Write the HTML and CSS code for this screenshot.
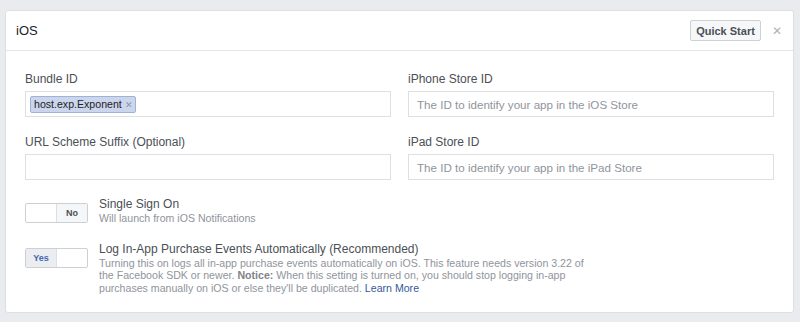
FILE: index.html
```html
<!DOCTYPE html>
<html lang="en">
<head>
    <meta http-equiv="Content-Type" content="text/html; charset=utf-8"/>
    <link rel="stylesheet" href="styles.css">
</head>
<body>
<div class="card">
    <div class="card_header">
        <div class="card_title">iOS</div>
        <div class="header_actions">
            <button class="btn">Quick Start</button>
            <span class="close">&#x2715;</span>
        </div>
    </div>
    <div class="card_body">
        <div class="fields">
            <div class="field">
                <div class="label">Bundle ID</div>
                <div class="input">
                    <span class="token">host.exp.Exponent <span class="token_x">&#x2715;</span></span>
                </div>
            </div>
            <div class="field">
                <div class="label">iPhone Store ID</div>
                <div class="input placeholder">The ID to identify your app in the iOS Store</div>
            </div>
            <div class="field">
                <div class="label">URL Scheme Suffix (Optional)</div>
                <div class="input"></div>
            </div>
            <div class="field">
                <div class="label">iPad Store ID</div>
                <div class="input placeholder">The ID to identify your app in the iPad Store</div>
            </div>
        </div>

        <div class="option">
            <div class="toggle">
                <span class="half"></span>
                <span class="half no">No</span>
            </div>
            <div class="option_text">
                <div class="option_title">Single Sign On</div>
                <div class="option_desc">Will launch from iOS Notifications</div>
            </div>
        </div>

        <div class="option">
            <div class="toggle">
                <span class="half yes">Yes</span>
                <span class="half"></span>
            </div>
            <div class="option_text">
                <div class="option_title">Log In-App Purchase Events Automatically (Recommended)</div>
                <div class="option_desc wide">Turning this on logs all in-app purchase events automatically on iOS. This feature needs version 3.22 of the Facebook SDK or newer. <b>Notice:</b> When this setting is turned on, you should stop logging in-app purchases manually on iOS or else they'll be duplicated. <a href="#">Learn More</a></div>
            </div>
        </div>
    </div>
</div>
</body>
</html>
```

FILE: styles.css
```css
body {
    margin: 0;
    background: #e9ebee;
    font-family: "Helvetica Neue", "Liberation Sans", Arial, sans-serif;
    color: #4b4f56;
}

.card {
    margin: 10px 6px 0 5px;
    background: #fff;
    border: 1px solid #dddfe2;
    border-radius: 3px;
}

.card_header {
    height: 39px;
    border-bottom: 1px solid #e5e5e5;
    display: flex;
    align-items: center;
    justify-content: space-between;
    padding: 0 11px 0 10px;
}

.card_title {
    font-size: 13px;
    color: #1d2129;
}

.header_actions {
    display: flex;
    align-items: center;
    gap: 11px;
}

.btn {
    width: 71px;
    height: 21px;
    padding: 0;
    background: #f6f7f9;
    border: 1px solid #ced0d4;
    border-radius: 2px;
    font-family: inherit;
    font-size: 11px;
    font-weight: bold;
    color: #4b4f56;
}

.close {
    font-size: 12px;
    color: #b0b3b8;
}

.card_body {
    padding: 20px 19px 18px;
}

.fields {
    display: grid;
    grid-template-columns: 1fr 1fr;
    column-gap: 17px;
    row-gap: 17px;
    margin-bottom: 17px;
}

.label {
    font-size: 12px;
    line-height: 16px;
    margin-bottom: 4px;
}

.input {
    height: 24px;
    border: 1px solid #dddfe2;
    display: flex;
    align-items: center;
    padding: 0 4px;
    font-size: 11.6px;
}

.placeholder {
    color: #90949c;
    padding-left: 8px;
}

.token {
    height: 15px;
    line-height: 15px;
    padding: 0 2px 0 3px;
    background: #cbd6ec;
    border: 1px solid #9fb3d9;
    border-radius: 2px;
    color: #1d2129;
    font-size: 10.6px;
}

.token_x {
    font-size: 9px;
    color: #8d949e;
}

.option {
    display: flex;
    gap: 11px;
    margin-bottom: 17px;
}

.option:last-child {
    margin-bottom: 0;
}

.toggle {
    width: 61px;
    height: 18px;
    margin-top: 6px;
    border: 1px solid #ccd0d5;
    border-radius: 2px;
    display: flex;
    flex-shrink: 0;
}

.half {
    flex: 1;
    font-size: 9px;
    font-weight: bold;
    line-height: 18px;
    text-align: center;
}

.no {
    border-left: 1px solid #dddfe2;
    background: #f5f6f7;
    color: #4b4f56;
}

.yes {
    border-right: 1px solid #dddfe2;
    background: #ebedf0;
    color: #4267b2;
}

.option_title {
    font-size: 12px;
    line-height: 14px;
    color: #4b4f56;
}

.option_desc {
    font-size: 10.6px;
    line-height: 12.5px;
    margin-top: 1px;
    color: #90949c;
}

.wide {
    width: 486px;
}

.option_desc b {
    color: #7f838a;
}

.option_desc a {
    color: #365899;
    text-decoration: none;
}
```
